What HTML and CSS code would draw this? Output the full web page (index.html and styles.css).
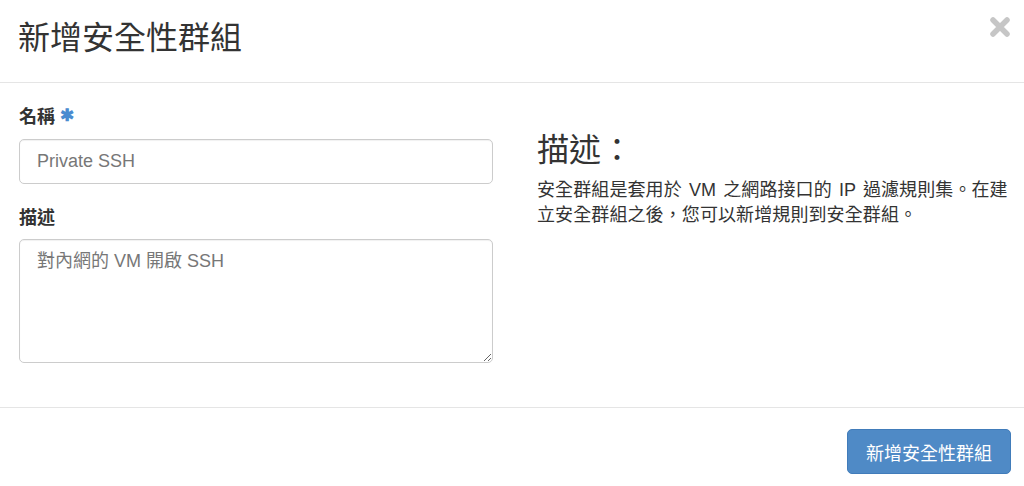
FILE: index.html
```html
<!DOCTYPE html>
<html lang="zh-Hant">
<head>
<meta charset="utf-8">
<title>新增安全性群組</title>
<link rel="stylesheet" href="styles.css">
</head>
<body>
<div class="modal">
  <div class="modal-header">
    <h1 class="modal-title">新增安全性群組</h1>
    <button class="close" type="button" aria-label="Close">
      <svg width="22" height="22" viewBox="0 0 22 22"><path d="M4 4 L18 18 M18 4 L4 18" stroke="#c6c6c6" stroke-width="5.5" stroke-linecap="round"/></svg>
    </button>
  </div>
  <div class="modal-body">
    <div class="form-col">
      <div class="form-group">
        <label class="label" for="name">名稱 <span class="req">✱</span></label>
        <input id="name" class="input" type="text" value="Private SSH">
      </div>
      <div class="form-group">
        <label class="label" for="desc">描述</label>
        <textarea id="desc" class="textarea">對內網的 VM 開啟 SSH</textarea>
      </div>
    </div>
    <div class="help-col">
      <h3 class="help-title">描述：</h3>
      <p class="help-text">安全群組是套用於 VM 之網路接口的 IP 過濾規則集。在建立安全群組之後，您可以新增規則到安全群組。</p>
    </div>
  </div>
  <div class="modal-footer">
    <button class="btn-primary" type="button">新增安全性群組</button>
  </div>
</div>
</body>
</html>
```
FILE: styles.css
```css
* { box-sizing: border-box; }
html, body { margin: 0; padding: 0; background: #fff; }
body {
  font-family: "Liberation Sans", "Noto Sans CJK TC", sans-serif;
  color: #333;
  width: 1024px;
  height: 486px;
  overflow: hidden;
}
.modal { display: flex; flex-direction: column; }
.modal-header {
  height: 83px;
  border-bottom: 1px solid #e5e5e5;
  display: flex;
  align-items: flex-start;
  justify-content: space-between;
  padding: 0 13px 0 18px;
}
.modal-title {
  margin: 20px 0 0 0;
  font-size: 32px;
  line-height: 36px;
  font-weight: 400;
  color: #333;
}
.close {
  margin-top: 16px;
  padding: 0;
  border: 0;
  background: transparent;
  width: 22px;
  height: 22px;
  display: flex;
}
.modal-body {
  display: flex;
  gap: 44px;
  padding: 22px 19px 22px 19px;
  height: 324px;
}
.form-col { width: 474px; flex: none; }
.form-group { margin-bottom: 22px; }
.form-group:last-child { margin-bottom: 0; }
.label {
  display: block;
  font-size: 18px;
  line-height: 24px;
  font-weight: 700;
  margin-bottom: 9px;
  color: #333;
}
.req { color: #4a8bd0; font-size: 17px; font-weight: 700; position: relative; top: -2px; }
.input, .textarea {
  display: block;
  width: 474px;
  font-family: "Liberation Sans", "Noto Sans CJK TC", sans-serif;
  font-size: 18px;
  color: #777;
  border: 1px solid #ccc;
  border-radius: 5px;
  background: #fff;
  box-shadow: inset 0 1px 1px rgba(0,0,0,0.06);
  padding: 0 17px;
}
.input { height: 45px; }
.textarea {
  height: 124px;
  padding-top: 8px;
  line-height: 26px;
  resize: vertical;
}
.help-col { width: 480px; flex: none; padding-top: 27px; }
.help-title {
  margin: 0 0 10px 0;
  font-size: 32px;
  line-height: 36px;
  font-weight: 400;
  color: #333;
}
.help-text {
  margin: 0;
  font-size: 18px;
  line-height: 25px;
  word-spacing: 2px;
  letter-spacing: 0.1px;
  color: #333;
}
.modal-footer {
  border-top: 1px solid #e5e5e5;
  display: flex;
  justify-content: flex-end;
  padding: 21px 13px 0 0;
}
.btn-primary {
  height: 45px;
  padding: 0 18px;
  font-family: "Liberation Sans", "Noto Sans CJK TC", sans-serif;
  font-size: 18px;
  color: #fff;
  background: #4f8ac6;
  border: 1px solid #417cba;
  border-radius: 5px;
}
```
